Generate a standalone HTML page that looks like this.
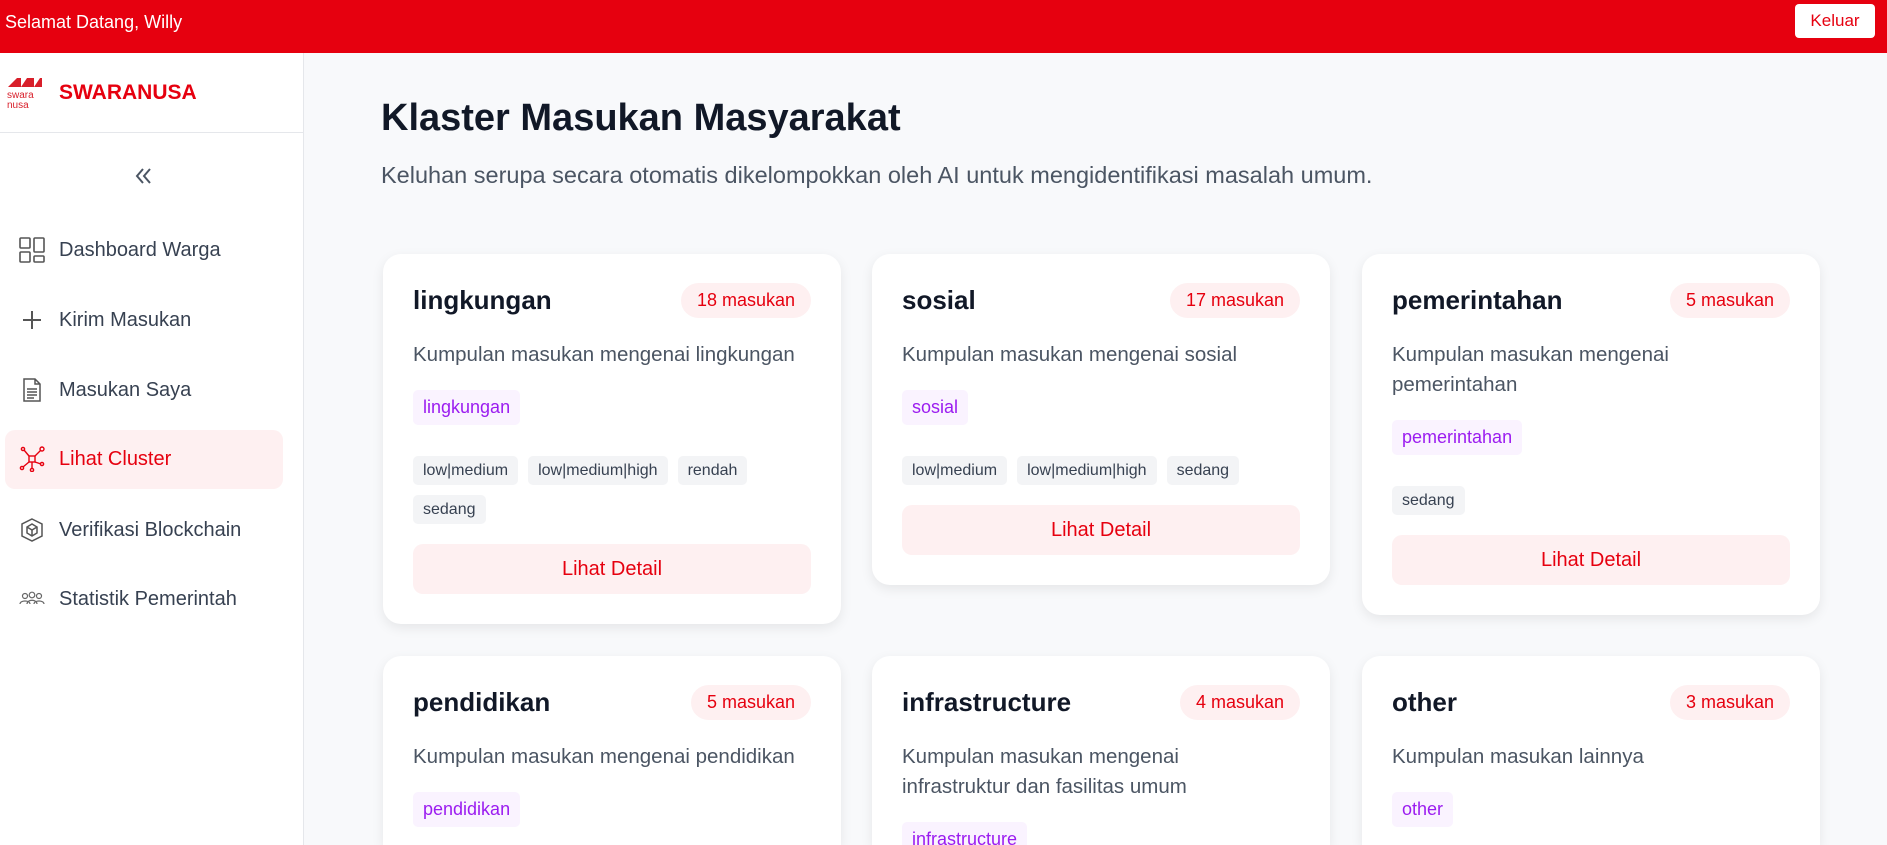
<!DOCTYPE html>
<html><head><meta charset="utf-8"><style>
*{box-sizing:border-box;margin:0;padding:0}
html,body{width:1887px;height:845px;overflow:hidden}
body{font-family:"Liberation Sans",sans-serif;background:#f8f9fb;position:relative}
.top{position:absolute;left:0;top:0;width:1887px;height:53px;background:#e6000f;color:#fff}
.top .w{position:absolute;left:5px;top:12px;font-size:18px}
.top .k{position:absolute;left:1795px;top:4px;width:80px;height:34px;background:#fff;color:#e6000f;border-radius:4px;font-size:17px;text-align:center;line-height:34px}
.side{position:absolute;left:0;top:53px;width:304px;height:792px;background:#fff;border-right:1px solid #e5e7eb}
.logo{height:80px;border-bottom:1px solid #e5e7eb;position:relative}
.logo .n{position:absolute;left:59px;top:28px;font-size:21px;font-weight:bold;color:#e6000f}
.nav{position:absolute;left:5px;width:278px;height:59px;border-radius:10px;font-size:20px;color:#374151}
.nav span{position:absolute;left:54px;top:18px}
.nav svg{position:absolute;left:14px;top:16px}
.nav.a{background:#fef0f1;color:#e6000f}
h1{position:absolute;left:381px;top:97px;font-size:38px;color:#111827}
.sub{position:absolute;left:381px;top:162px;font-size:23.5px;color:#4b5563}
.clip{position:absolute;left:0;top:0;width:1887px;height:845px;overflow:hidden}
.card{position:absolute;width:458px;background:#fff;border-radius:18px;box-shadow:0 4px 12px rgba(0,0,0,.08);padding:29px 30px 30px}
.card.b{height:189px;overflow:hidden;border-radius:18px 18px 0 0}
.hd{display:flex;justify-content:space-between;align-items:center;height:35px}
.hd b{font-size:26px;color:#111827}
.badge{background:#fef0f1;color:#e6000f;font-size:18px;height:35px;line-height:35px;padding:0 16px;border-radius:18px}
.d{margin-top:22px;font-size:20.5px;line-height:30px;color:#4b5563}
.pt{display:inline-block;margin-top:20px;background:#faf3ff;color:#9b1cf0;font-size:18px;height:35px;line-height:35px;padding:0 10px;border-radius:5px}
.tags{margin-top:31px;display:flex;flex-wrap:wrap;gap:10px}
.tags i{font-style:normal;background:#f3f4f6;color:#374151;font-size:16px;height:29px;line-height:29px;padding:0 10px;border-radius:5px}
.btn{margin-top:20px;height:50px;line-height:50px;background:#fef0f1;color:#e6000f;font-size:20px;text-align:center;border-radius:10px}
</style></head><body>
<div class="top"><div class="w">Selamat Datang, Willy</div><div class="k">Keluar</div></div>
<div class="side">
 <div class="logo">
  <svg style="position:absolute;left:7px;top:22px" width="36" height="36" viewBox="0 0 36 36"><path d="M1 12 L10 3 L14 3 L14 12 L20 3 L27 3 L27 12 L33 3 L35 3 L35 12 Z" fill="#d81f2a"/><text x="0" y="23" font-size="10" fill="#d81f2a" font-family="Liberation Sans">swara</text><text x="0" y="33" font-size="10" fill="#d81f2a" font-family="Liberation Sans">nusa</text></svg>
  <div class="n">SWARANUSA</div>
 </div>
 <svg style="position:absolute;left:133px;top:113px" width="20" height="20" viewBox="0 0 20 20" fill="none" stroke="#4b5563" stroke-width="2"><path d="M10 3 L4 10 L10 17 M17 3 L11 10 L17 17"/></svg>
</div>
<div class="nav" style="top:221px"><svg width="26" height="26" viewBox="0 0 26 26" fill="none" stroke="#555" stroke-width="1.6"><rect x="1" y="1" width="10" height="10" rx="1"/><rect x="15" y="1" width="10" height="14" rx="1"/><rect x="1" y="15" width="10" height="10" rx="1"/><rect x="15" y="19" width="10" height="6" rx="1"/></svg><span>Dashboard Warga</span></div>
<div class="nav" style="top:291px"><svg width="26" height="26" viewBox="0 0 26 26" fill="none" stroke="#555" stroke-width="2"><path d="M13 4V22M4 13H22"/></svg><span>Kirim Masukan</span></div>
<div class="nav" style="top:361px"><svg width="26" height="26" viewBox="0 0 26 26" fill="none" stroke="#555" stroke-width="1.5"><path d="M5 2H16L21 7V24H5Z M16 2V7H21 M8 12H18M8 15H18M8 18H18M8 21H15"/></svg><span>Masukan Saya</span></div>
<div class="nav a" style="top:430px"><svg width="26" height="26" viewBox="0 0 26 26" fill="none" stroke="#e6000f" stroke-width="1.4"><rect x="10" y="10" width="6" height="6"/><circle cx="4" cy="3" r="1.6"/><circle cx="23" cy="3" r="2"/><circle cx="3" cy="22" r="1.6"/><circle cx="23" cy="18" r="1.6"/><circle cx="13" cy="24" r="1.6"/><path d="M5 4L10 10M22 4L16 10M4 21L10 16M16 16L22 18M13 16V22"/></svg><span>Lihat Cluster</span></div>
<div class="nav" style="top:501px"><svg width="26" height="26" viewBox="0 0 26 26" fill="none" stroke="#555" stroke-width="1.5"><path d="M13 2L23 7V19L13 24L3 19V7Z"/><path d="M13 7L18 10V16L13 19L8 16V10Z M8 10L13 13L18 10M13 13V19"/></svg><span>Verifikasi Blockchain</span></div>
<div class="nav" style="top:570px"><svg width="26" height="26" viewBox="0 0 26 26" fill="none" stroke="#666" stroke-width="1.2"><circle cx="6" cy="10" r="2.5"/><circle cx="13" cy="9" r="2.8"/><circle cx="20" cy="10" r="2.5"/><path d="M1 18C1 14 11 14 11 18M8 18C8 13 18 13 18 18M15 18C15 14 25 14 25 18"/></svg><span>Statistik Pemerintah</span></div>

<h1>Klaster Masukan Masyarakat</h1>
<div class="sub">Keluhan serupa secara otomatis dikelompokkan oleh AI untuk mengidentifikasi masalah umum.</div>

<div class="clip">
<div class="card" style="left:383px;top:254px"><div class="hd"><b>lingkungan</b><span class="badge">18 masukan</span></div><div class="d">Kumpulan masukan mengenai lingkungan</div><span class="pt">lingkungan</span><div class="tags"><i>low|medium</i><i>low|medium|high</i><i>rendah</i><i>sedang</i></div><div class="btn">Lihat Detail</div></div>
<div class="card" style="left:872px;top:254px"><div class="hd"><b>sosial</b><span class="badge">17 masukan</span></div><div class="d">Kumpulan masukan mengenai sosial</div><span class="pt">sosial</span><div class="tags"><i>low|medium</i><i>low|medium|high</i><i>sedang</i></div><div class="btn">Lihat Detail</div></div>
<div class="card" style="left:1362px;top:254px"><div class="hd"><b>pemerintahan</b><span class="badge">5 masukan</span></div><div class="d">Kumpulan masukan mengenai<br>pemerintahan</div><span class="pt">pemerintahan</span><div class="tags"><i>sedang</i></div><div class="btn">Lihat Detail</div></div>
<div class="card b" style="left:383px;top:656px"><div class="hd"><b>pendidikan</b><span class="badge">5 masukan</span></div><div class="d">Kumpulan masukan mengenai pendidikan</div><span class="pt">pendidikan</span></div>
<div class="card b" style="left:872px;top:656px"><div class="hd"><b>infrastructure</b><span class="badge">4 masukan</span></div><div class="d">Kumpulan masukan mengenai<br>infrastruktur dan fasilitas umum</div><span class="pt">infrastructure</span></div>
<div class="card b" style="left:1362px;top:656px"><div class="hd"><b>other</b><span class="badge">3 masukan</span></div><div class="d">Kumpulan masukan lainnya</div><span class="pt">other</span></div>
</div>
</body></html>
